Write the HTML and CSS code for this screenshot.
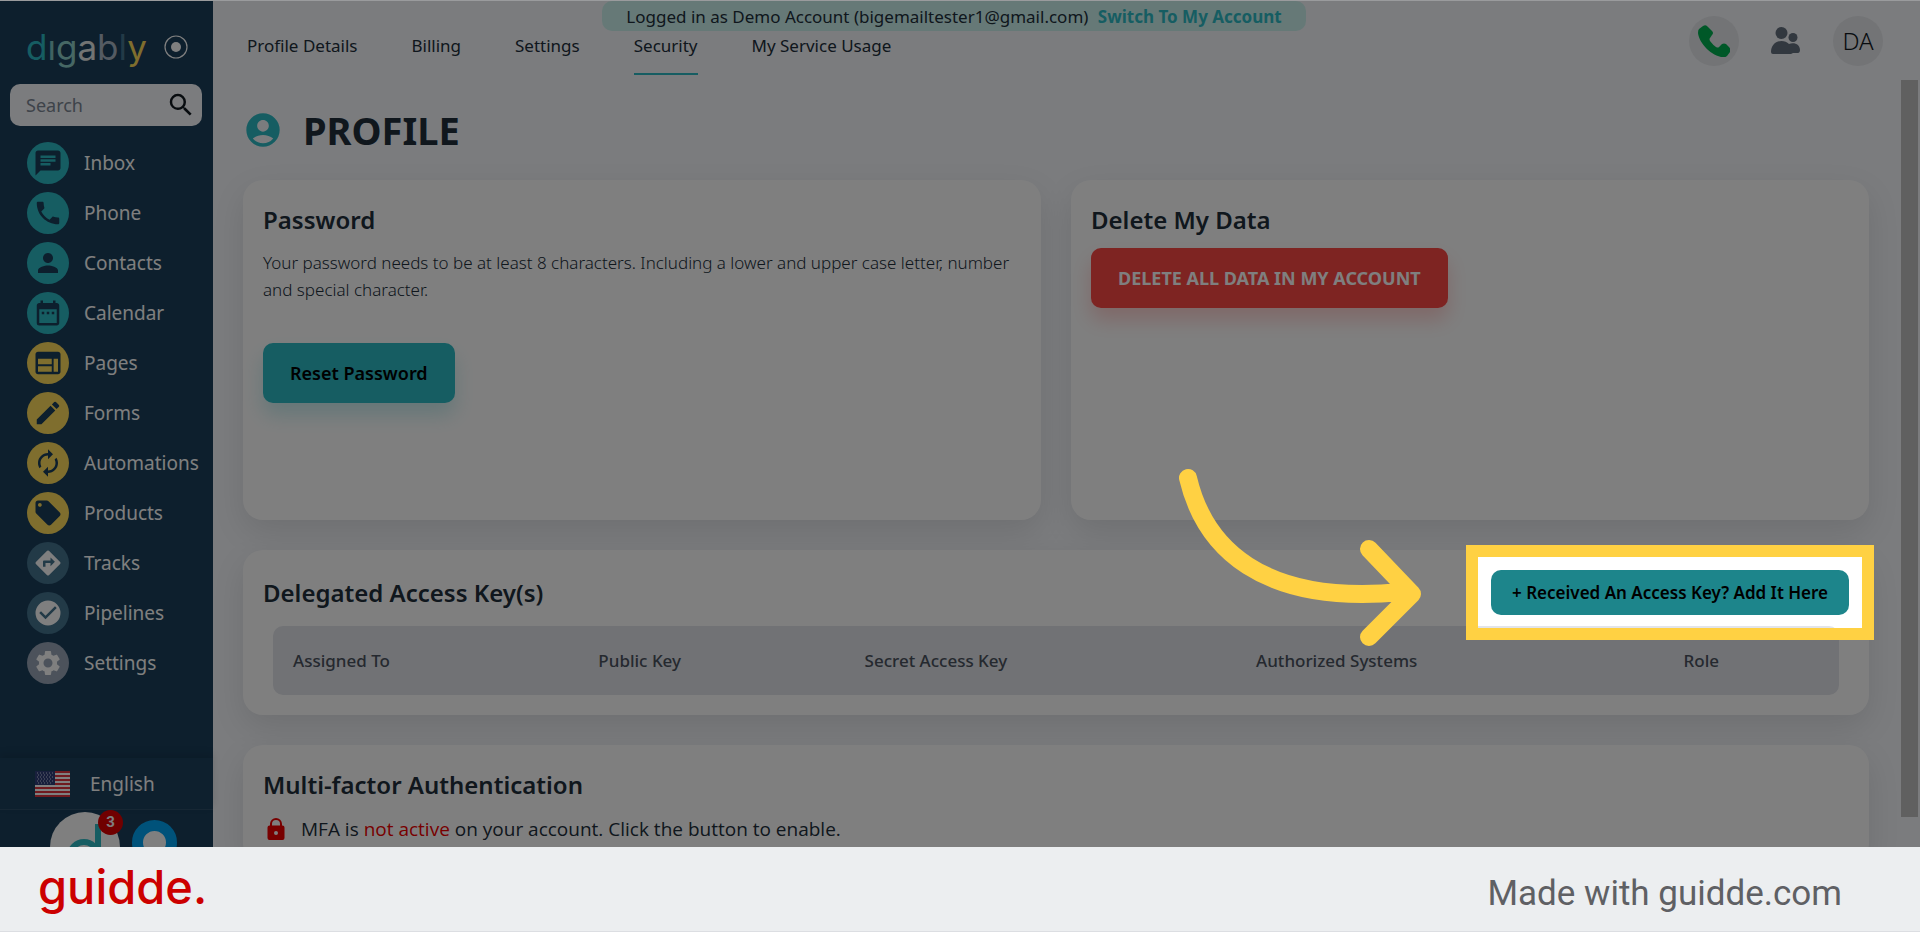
FILE: index.html
```html
<!DOCTYPE html>
<html lang="en">

<head>
    <meta charset="UTF-8">
    <meta name="viewport" content="width=device-width, initial-scale=1.0">
    <title>Profile - Security</title>
    <link rel="stylesheet" href="styles.css">
</head>

<body>
    <div class="stage">
        <aside class="sidebar">
            <div class="brand">
                <a class="brand-name" href="#"><span class="c1">d</span><span class="c2">ı</span><span class="c3">g</span><span class="c4">a</span><span class="c5">b</span><span class="c6">l</span><span class="c7">y</span></a>
                <svg class="brand-dot" viewBox="0 0 24 24"><circle cx="12" cy="12" r="11" fill="none" stroke="#fff" stroke-width="1.2"/><circle cx="12" cy="12" r="5" fill="#fff"/></svg>
            </div>
            <div class="search">
                <input type="text" class="search-input" placeholder="Search" aria-label="Search">
                <svg class="search-icon" viewBox="0 0 24 24"><path d="M15.5 14h-.79l-.28-.27A6.47 6.47 0 0 0 16 9.5 6.5 6.5 0 1 0 9.500 16c1.610 0 3.090-.59 4.230-1.570l.27.28v.79l5 4.990L20.490 19l-4.990-5zm-6 0C7.010 14 5 11.990 5 9.500S7.010 5 9.500 5 14 7.010 14 9.500 11.990 14 9.500 14z"/></svg>
            </div>
            <nav class="menu">
                <a class="menu-item teal" href="#"><span class="dot"><svg viewBox="0 0 24 24"><path d="M20 2H4c-1.100 0-1.990.9-1.990 2L2 22l4-4h14c1.100 0 2-.9 2-2V4c0-1.100-.9-2-2-2zM6 9h12v2H6V9zm8 5H6v-2h8v2zm4-6H6V6h12v2z"/></svg></span>Inbox</a>
                <a class="menu-item teal" href="#"><span class="dot"><svg viewBox="0 0 24 24"><path d="M6.620 10.790c1.440 2.830 3.760 5.140 6.590 6.590l2.200-2.200c.27-.27.67-.36 1.020-.24 1.120.37 2.330.57 3.570.57.55 0 1 .45 1 1V20c0 .55-.45 1-1 1-9.390 0-17-7.610-17-17 0-.55.45-1 1-1h3.500c.55 0 1 .45 1 1 0 1.250.2 2.450.57 3.570.11.35.03.74-.25 1.020l-2.200 2.200z"/></svg></span>Phone</a>
                <a class="menu-item teal" href="#"><span class="dot"><svg viewBox="0 0 24 24"><path d="M12 12c2.210 0 4-1.790 4-4s-1.790-4-4-4-4 1.790-4 4 1.790 4 4 4zm0 2c-2.670 0-8 1.340-8 4v2h16v-2c0-2.660-5.330-4-8-4z"/></svg></span>Contacts</a>
                <a class="menu-item teal" href="#"><span class="dot"><svg viewBox="0 0 24 24"><path d="M9 11H7v2h2v-2zm4 0h-2v2h2v-2zm4 0h-2v2h2v-2zm2-7h-1V2h-2v2H8V2H6v2H5c-1.110 0-1.990.9-1.990 2L3 20a2 2 0 0 0 2 2h14c1.100 0 2-.9 2-2V6c0-1.100-.9-2-2-2zm0 16H5V9h14v11z"/></svg></span>Calendar</a>
                <a class="menu-item yellow" href="#"><span class="dot"><svg viewBox="0 0 24 24"><path d="M20 3H4c-1.100 0-2 .9-2 2v14c0 1.100.9 2 2 2h16c1.100 0 2-.9 2-2V5c0-1.100-.9-2-2-2zM15 19H4v-4.500h11V19zm0-6H4V8.500h11V13zm5 6h-3.500V8.500H20V19z"/></svg></span>Pages</a>
                <a class="menu-item yellow" href="#"><span class="dot"><svg viewBox="0 0 24 24"><path d="M3 17.250V21h3.750L17.810 9.940l-3.750-3.750L3 17.250zM20.710 7.040a1 1 0 0 0 0-1.410l-2.340-2.340a1 1 0 0 0-1.410 0l-1.830 1.830 3.750 3.750 1.830-1.830z"/></svg></span>Forms</a>
                <a class="menu-item yellow" href="#"><span class="dot"><svg viewBox="0 0 24 24"><path d="M12 6v3l4-4-4-4v3c-4.420 0-8 3.580-8 8 0 1.570.46 3.030 1.240 4.260L6.700 14.800A5.870 5.870 0 0 1 6 12c0-3.310 2.690-6 6-6zm6.760 1.740L17.300 9.200c.44.84.7 1.790.7 2.800 0 3.310-2.690 6-6 6v-3l-4 4 4 4v-3c4.420 0 8-3.580 8-8 0-1.570-.46-3.030-1.240-4.260z"/></svg></span>Automations</a>
                <a class="menu-item yellow" href="#"><span class="dot"><svg viewBox="0 0 24 24"><path d="M21.410 11.580l-9-9C12.050 2.220 11.550 2 11 2H4c-1.100 0-2 .9-2 2v7c0 .55.22 1.050.59 1.420l9 9c.36.36.86.58 1.410.58s1.050-.22 1.410-.59l7-7c.37-.36.59-.86.59-1.410s-.23-1.060-.59-1.420zM5.500 7C4.670 7 4 6.330 4 5.500S4.670 4 5.500 4 7 4.670 7 5.500 6.330 7 5.500 7z"/></svg></span>Products</a>
                <a class="menu-item slate" href="#"><span class="dot"><svg viewBox="0 0 24 24"><path d="M21.710 11.290l-9-9a1 1 0 0 0-1.410 0l-9 9a1 1 0 0 0 0 1.410l9 9c.39.39 1.020.39 1.410 0l9-9a1 1 0 0 0 0-1.410zM14 14.500V12h-4v3H8v-4c0-.55.45-1 1-1h5V7.500l3.500 3.500-3.500 3.500z"/></svg></span>Tracks</a>
                <a class="menu-item slate" href="#"><span class="dot"><svg viewBox="0 0 24 24"><path d="M12 2a10 10 0 1 0 0 20 10 10 0 0 0 0-20zm-2 15l-5-5 1.410-1.410L10 14.170l7.590-7.590L19 8l-9 9z"/></svg></span>Pipelines</a>
                <a class="menu-item gray" href="#"><span class="dot"><svg viewBox="0 0 24 24"><path d="M19.140 12.940c.04-.3.060-.61.060-.94s-.02-.64-.07-.94l2.030-1.580a.49.49 0 0 0 .12-.61l-1.920-3.320a.49.49 0 0 0-.59-.22l-2.390.96a7 7 0 0 0-1.620-.94l-.36-2.540a.48.48 0 0 0-.48-.41h-3.840a.47.47 0 0 0-.47.41l-.36 2.540c-.59.24-1.130.57-1.620.94l-2.390-.96a.48.48 0 0 0-.59.22L2.740 8.870a.47.47 0 0 0 .12.610l2.030 1.580c-.05.3-.09.63-.09.94s.02.64.07.94l-2.030 1.580a.49.49 0 0 0-.12.61l1.920 3.320c.12.22.37.29.59.22l2.390-.96c.5.38 1.030.7 1.620.94l.36 2.540c.05.24.24.41.48.41h3.840c.24 0 .44-.17.47-.41l.36-2.540c.59-.24 1.130-.56 1.620-.94l2.390.96c.22.08.47 0 .59-.22l1.920-3.320a.47.47 0 0 0-.12-.61l-2.010-1.580zM12 15.600a3.600 3.600 0 1 1 0-7.200 3.600 3.600 0 0 1 0 7.200z"/></svg></span>Settings</a>
            </nav>
            <a class="language" href="#">
                <svg class="flag" viewBox="0 0 35 26">
                    <path fill="#fff" d="M0 0h35v26H0z"/>
                    <path stroke="#e0343f" stroke-width="2" d="M0 1h35M0 5h35M0 9h35M0 13h35M0 17h35M0 21h35M0 25h35"/>
                    <path fill="#303e78" d="M0 0h20v14H0z"/>
                    <path stroke="#c3c9e0" stroke-width="1" stroke-dasharray="1 2" d="M2 2h17M3 4h15M2 6h17M3 8h15M2 10h17M3 12h15"/>
                </svg>
                English
            </a>
            <div class="chat">
                <div class="chat-logo">
                    <svg viewBox="0 0 70 35"><path fill="none" stroke="#2cbbc5" stroke-width="6" d="M48 12v30M48 44a14 14 0 1 0-28 0"/></svg>
                    <span class="badge">3</span>
                </div>
                <div class="chat-bubble"></div>
            </div>
        </aside>

        <main class="main">
            <div class="notice">Logged in as Demo Account (bigemailtester1@gmail.com) <a href="#">Switch To My Account</a></div>
            <header class="topbar">
                <nav class="tabs">
                    <a class="tab" href="#">Profile Details</a>
                    <a class="tab" href="#">Billing</a>
                    <a class="tab" href="#">Settings</a>
                    <a class="tab active" href="#">Security</a>
                    <a class="tab" href="#">My Service Usage</a>
                </nav>
                <div class="tools">
                    <button class="round-btn" aria-label="Call"><svg class="call-icon" viewBox="0 0 32 32"><path d="M1 4 5 1q3-2 5 1l4 4q2 2 0 4l-2 3q-1 1 0 3 3 4 6 6 2 1 3 0l3-3q2-1 4 0l3 3q2 2 1 5l-3 4q-2 2-6 1C11 29 1 17 0 8q0-3 1-4z"/></svg></button>
                    <button class="icon-btn" aria-label="Team"><svg viewBox="0 0 30 28"><circle cx="10.500" cy="6" r="6"/><circle cx="22" cy="10.500" r="4.500"/><path d="M0 25c0-6 4-11 10.500-11 3 0 5.500 1 7.500 3 6-2 11 1 11 6 0 2-1 3-2 3h-5l-2 1H2q-2 0-2-2z"/></svg></button>
                    <button class="round-btn initials">DA</button>
                </div>
            </header>
            <div class="body">
                <div class="content">
                    <h1><svg viewBox="0 0 24 24"><path d="M12 2a10 10 0 1 0 0 20 10 10 0 0 0 0-20zm0 4c1.930 0 3.500 1.570 3.500 3.500S13.930 13 12 13s-3.500-1.570-3.500-3.500S10.070 6 12 6zm0 14a8 8 0 0 1-6.140-2.880C7.550 15.800 9.680 15 12 15s4.450.8 6.140 2.120A8 8 0 0 1 12 20z"/></svg>PROFILE</h1>
                    <div class="row">
                        <section class="card tall">
                            <h2>Password</h2>
                            <p>Your password needs to be at least 8 characters. Including a lower and upper case letter, number and special character.</p>
                            <button class="btn btn-reset">Reset Password</button>
                        </section>
                        <section class="card tall">
                            <h2>Delete My Data</h2>
                            <button class="btn btn-danger">DELETE ALL DATA IN MY ACCOUNT</button>
                        </section>
                    </div>
                    <section class="card keys">
                        <div class="card-head">
                            <h2>Delegated Access Key(s)</h2>
                            <div class="spot">
                                <button class="btn-add">+ Received An Access Key? Add It Here</button>
                                <div class="spot-frame"></div>
                                <svg class="spot-arrow" viewBox="0 0 260 195"><path d="M18 18C34 86 90 146 232 132M199 89l43 45-43 43"/></svg>
                            </div>
                        </div>
                        <table>
                            <colgroup>
                                <col class="col-assigned"><col class="col-public"><col class="col-secret"><col class="col-systems"><col class="col-role">
                            </colgroup>
                            <thead>
                                <tr>
                                    <th>Assigned To</th>
                                    <th>Public Key</th>
                                    <th>Secret Access Key</th>
                                    <th>Authorized Systems</th>
                                    <th>Role</th>
                                </tr>
                            </thead>
                        </table>
                    </section>
                    <section class="card">
                        <h2>Multi-factor Authentication</h2>
                        <div class="mfa">
                            <svg viewBox="0 0 18 22"><path d="M15.500 7.500H15V6A6 6 0 0 0 3 6v1.500h-.5A2 2 0 0 0 .5 9.500v10.500a2 2 0 0 0 2 2h13a2 2 0 0 0 2-2V9.500a2 2 0 0 0-2-2zM9 17a2 2 0 1 1 0-4 2 2 0 0 1 0 4zm4-9.500H5V6a4 4 0 0 1 8 0v1.500z"/></svg>
                            <span>MFA is <span class="off">not active</span> on your account. Click the button to enable.</span>
                        </div>
                    </section>
                </div>
                <div class="scrollbar"></div>
            </div>
        </main>
    </div>

    <footer class="footer">
        <a class="guidde" href="#">guidde.</a>
        <span class="made">Made with guidde.com</span>
    </footer>
</body>

</html>
```
FILE: styles.css
```css
* {
    box-sizing: border-box;
}

body {
    margin: 0;
    height: 100vh;
    display: flex;
    flex-direction: column;
    overflow: hidden;
    border-top: 1px solid #9a9b9d;
    font-family: "Noto Sans", "Open Sans", sans-serif;
    font-size: 17px;
    color: #212e3a;
}

a {
    color: inherit;
    text-decoration: none;
}

button {
    font-family: inherit;
    border: none;
    cursor: pointer;
}

h1,
h2,
p {
    margin: 0;
}

svg {
    flex: none;
}

.stage {
    position: relative;
    flex: 1;
    min-height: 0;
    display: flex;
    overflow: hidden;
    background-color: #f6f8fc;
}

/* sidebar */
.sidebar {
    width: 213px;
    flex: none;
    display: flex;
    flex-direction: column;
    background-color: #1a3e5a;
    color: #fff;
}

.brand {
    display: flex;
    align-items: center;
    justify-content: space-between;
    height: 83px;
    padding: 8px 25px 0 26px;
}

.brand-name {
    font-family: Inter, sans-serif;
    font-size: 35px;
    font-weight: 400;
    line-height: 40px;
}

.c1 { color: #2cbbc5; }
.c2 { color: #7fc4c2; }
.c3 { color: #8ccfc8; }
.c4 { color: #e4e8e6; }
.c5 { color: #a9b6c4; }
.c6 { color: #44748e; }
.c7 { color: #ffdc5c; }

.brand-dot {
    width: 24px;
    height: 24px;
}

.search {
    display: flex;
    align-items: center;
    height: 42px;
    margin: 0 11px 0 10px;
    padding: 0 6px 0 16px;
    border-radius: 10px;
    background-color: #f6f8fc;
}

.search-input {
    flex: 1;
    min-width: 0;
    padding: 0;
    border: none;
    outline: none;
    background: none;
    font-family: inherit;
    font-size: 18px;
}

.search-input::placeholder {
    color: #7c8794;
    opacity: 1;
}

.search-icon {
    width: 30px;
    height: 30px;
    fill: #10181f;
}

.menu {
    flex: 1;
    display: flex;
    flex-direction: column;
    gap: 8px;
    padding: 16px 0 0 27px;
}

.menu-item {
    display: flex;
    align-items: center;
    gap: 15px;
    font-size: 19px;
    white-space: nowrap;
}

.dot {
    width: 42px;
    height: 42px;
    padding: 6px;
    border-radius: 50%;
}

.dot svg {
    display: block;
    width: 30px;
    height: 30px;
    fill: #1a3e5a;
}

.teal .dot { background-color: #2cbbc5; }
.yellow .dot { background-color: #ffdc5c; }
.slate .dot { background-color: #44748e; }
.gray .dot { background-color: #98a4b6; }

.slate svg,
.gray svg {
    fill: #fff;
}

.language {
    display: flex;
    align-items: center;
    gap: 20px;
    height: 52px;
    padding-left: 35px;
    border-bottom: 1px solid #2e4f69;
    background-color: #1d415c;
    box-shadow: 0 -4px 8px rgba(0, 0, 0, 0.12);
    font-size: 19px;
}

.flag {
    width: 35px;
    height: 26px;
}

.chat {
    display: flex;
    gap: 12px;
    height: 37px;
    padding: 2px 0 0 50px;
}

.chat-logo {
    position: relative;
    width: 70px;
    height: 70px;
    border-radius: 50%;
    background-color: #fff;
}

.badge {
    position: absolute;
    top: -2px;
    right: -3px;
    width: 25px;
    height: 25px;
    border-radius: 50%;
    background-color: #e00000;
    font: bold 15px/25px Roboto, sans-serif;
    text-align: center;
}

.chat-bubble {
    width: 45px;
    height: 45px;
    margin-top: 8px;
    border: 11px solid #00a4f4;
    border-radius: 50%;
    background-color: #fff;
}

/* main column */
.main {
    flex: 1;
    min-width: 0;
    display: flex;
    flex-direction: column;
}

.notice {
    position: absolute;
    top: 0;
    left: 0;
    right: 12px;
    width: fit-content;
    margin: 0 auto;
    padding: 2px 24px 0;
    border-radius: 10px;
    background-color: #ccf3ef;
    line-height: 28px;
}

.notice a {
    margin-left: 5px;
    color: #2cbbc5;
    font-weight: 700;
}

.topbar {
    flex: none;
    display: flex;
    justify-content: space-between;
    height: 79px;
    padding: 0 37px 0 34px;
}

.tabs {
    display: flex;
    align-items: flex-end;
    gap: 54px;
    height: 74px;
}

.tab {
    height: 43px;
    line-height: 27px;
    border-bottom: 2px solid transparent;
}

.tab.active {
    border-color: #2cbbc5;
}

.tools {
    display: flex;
    align-items: center;
    gap: 32px;
}

.round-btn {
    width: 50px;
    height: 50px;
    padding: 0;
    border-radius: 50%;
    background-color: #e6e8ec;
}

.call-icon {
    display: block;
    width: 32px;
    height: 32px;
    margin: 0 auto;
    fill: #00b050;
}

.icon-btn {
    padding: 0;
    background: none;
}

.icon-btn svg {
    display: block;
    width: 30px;
    height: 28px;
    fill: #64707e;
}

.initials {
    font-size: 24px;
    font-weight: 300;
    color: #10181f;
}

.body {
    flex: 1;
    min-height: 0;
    display: flex;
}

.content {
    flex: 1;
    min-width: 0;
    display: flex;
    flex-direction: column;
    gap: 30px;
    padding: 30px 32px 0 30px;
}

.scrollbar {
    width: 17px;
    height: calc(100% - 30px);
    margin-right: 2px;
    background-color: #c0c0c0;
}

h1 {
    display: flex;
    align-items: center;
    gap: 20px;
    height: 40px;
    font-size: 38px;
    font-weight: 700;
}

h1 svg {
    width: 40px;
    height: 40px;
    fill: #2cbbc5;
}

h2 {
    font-size: 24px;
    line-height: 32px;
    font-weight: 600;
}

.row {
    display: grid;
    grid-template-columns: 1fr 1fr;
    gap: 30px;
}

.card {
    flex: none;
    padding: 24px 20px 20px;
    border-radius: 20px;
    background-color: #fff;
    box-shadow: 0 12px 32px rgba(0, 0, 0, 0.1);
}

.tall {
    min-height: 340px;
}

.card p {
    margin-top: 13px;
    line-height: 27px;
    font-weight: 300;
}

.btn {
    display: block;
    height: 60px;
    padding: 0 27px;
    border-radius: 10px;
    font-size: 18px;
    font-weight: 600;
}

.btn-reset {
    margin-top: 40px;
    background-color: #2cbbc5;
    box-shadow: 0 12px 20px rgba(44, 187, 197, 0.25);
}

.btn-danger {
    margin-top: 12px;
    background-color: #fd4844;
    color: #fff;
    font-weight: 700;
    box-shadow: 0 12px 20px rgba(253, 72, 68, 0.25);
}

.keys {
    padding-top: 20px;
}

.card-head {
    display: flex;
    align-items: center;
    justify-content: space-between;
    height: 45px;
    margin-bottom: 11px;
}

.btn-add {
    height: 45px;
    padding: 0 21px;
    border-radius: 10px;
    background-color: #1d858b;
    font-size: 17px;
    font-weight: 600;
}

/* walkthrough highlight: dims everything around the button */
.spot {
    position: relative;
}

.spot-frame {
    position: absolute;
    z-index: 10;
    inset: -13px;
    outline: 12px solid #ffd143;
    box-shadow: 0 0 0 2000px rgba(0, 0, 0, 0.5);
    pointer-events: none;
}

.spot-arrow {
    position: absolute;
    z-index: 11;
    top: -110px;
    right: 419px;
    width: 260px;
    height: 195px;
    fill: none;
    stroke: #ffd143;
    stroke-width: 18;
    stroke-linecap: round;
    stroke-linejoin: round;
}

table {
    width: calc(100% - 20px);
    margin: 0 10px;
    border-collapse: collapse;
    table-layout: fixed;
}

.col-assigned { width: 19.5%; }
.col-public { width: 17%; }
.col-secret { width: 25%; }
.col-systems { width: 27.3%; }

th {
    height: 69px;
    padding: 0 20px;
    background-color: #e2e4ea;
    color: #4a525e;
    font-weight: 500;
    text-align: left;
}

th:first-child {
    border-radius: 10px 0 0 10px;
}

th:last-child {
    border-radius: 0 10px 10px 0;
}

.mfa {
    display: flex;
    align-items: center;
    gap: 16px;
    margin-top: 14px;
    padding-left: 4px;
    font-family: "Open Sans", sans-serif;
    font-size: 19px;
    line-height: 28px;
}

.mfa svg {
    width: 18px;
    height: 22px;
    fill: #f00000;
}

.off {
    color: #f00000;
}

/* footer */
.footer {
    flex: none;
    display: flex;
    align-items: center;
    justify-content: space-between;
    height: 85px;
    padding: 0 78px 0 38px;
    border-bottom: 1px solid #dcdee2;
    background-color: #eceef0;
}

.guidde {
    padding-bottom: 6px;
    color: #cc0000;
    font-family: Inter, sans-serif;
    font-size: 47px;
    font-weight: 500;
}

.made {
    padding-top: 8px;
    color: #5f6064;
    font-family: Roboto, sans-serif;
    font-size: 35px;
}
```
